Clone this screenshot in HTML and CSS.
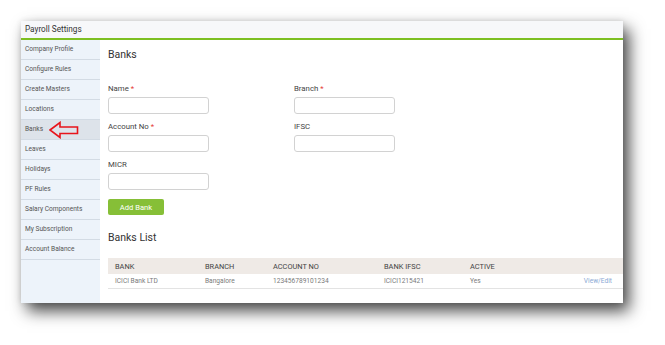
FILE: index.html
```html
<!DOCTYPE html>
<html>
<head>
<meta charset="utf-8">
<link rel="stylesheet" href="styles.css">
</head>
<body>
<div class="panel">
  <div class="panel-head">Payroll Settings</div>
  <div class="panel-body">
    <nav class="sidebar">
      <div class="nav-item">Company Profile</div>
      <div class="nav-item">Configure Rules</div>
      <div class="nav-item">Create Masters</div>
      <div class="nav-item">Locations</div>
      <div class="nav-item active">Banks
        <svg class="arrow" width="30" height="18" viewBox="0 0 30 18"><polygon points="1,9 11,1.5 11,6 28.5,6 28.5,12.5 11,12.5 11,16.5" fill="none" stroke="#e8141b" stroke-width="1.6" stroke-linejoin="miter"/></svg>
      </div>
      <div class="nav-item">Leaves</div>
      <div class="nav-item">Holidays</div>
      <div class="nav-item">PF Rules</div>
      <div class="nav-item">Salary Components</div>
      <div class="nav-item">My Subscription</div>
      <div class="nav-item">Account Balance</div>
    </nav>
    <main class="content">
      <h2 class="title">Banks</h2>
      <div class="form">
        <div class="field"><label>Name <span class="req">*</span></label><div class="input"></div></div>
        <div class="field"><label>Branch <span class="req">*</span></label><div class="input"></div></div>
        <div class="field"><label>Account No <span class="req">*</span></label><div class="input"></div></div>
        <div class="field"><label>IFSC</label><div class="input"></div></div>
        <div class="field"><label>MICR</label><div class="input"></div></div>
      </div>
      <button class="btn">Add Bank</button>
      <h2 class="title list-title">Banks List</h2>
      <div class="table">
        <div class="row head">
          <span>BANK</span><span>BRANCH</span><span>ACCOUNT NO</span><span>BANK IFSC</span><span>ACTIVE</span><span></span>
        </div>
        <div class="row">
          <span>ICICI Bank LTD</span><span>Bangalore</span><span>123456789101234</span><span>ICICI1215421</span><span>Yes</span><span class="link">View/Edit</span>
        </div>
      </div>
    </main>
  </div>
</div>
</body>
</html>
```
FILE: styles.css
```css
html, body {
  margin: 0;
  padding: 0;
  background: #ffffff;
}
body {
  font-family: Roboto, "Liberation Sans", sans-serif;
  padding: 21px 0 0 21px;
  width: 665px;
  height: 345px;
  box-sizing: border-box;
  overflow: hidden;
}
.panel {
  width: 602px;
  height: 282px;
  background: #fff;
  display: flex;
  flex-direction: column;
  box-shadow: 6px 8px 15px rgba(0,0,0,0.72), 0 0 6px rgba(0,0,0,0.1);
}
.panel-head {
  height: 17px;
  line-height: 17px;
  background: #f7f8fa;
  border-bottom: 2px solid #7dbf22;
  font-size: 8.2px;
  color: #333;
  padding-left: 4px;
}
.panel-body {
  flex: 1;
  display: flex;
  min-height: 0;
}
.sidebar {
  width: 79px;
  background: #edf3fa;
  display: flex;
  flex-direction: column;
}
.nav-item {
  position: relative;
  height: 19px;
  line-height: 19px;
  border-bottom: 1px solid #d3dbe4;
  font-size: 6.6px;
  color: #555;
  padding-left: 4px;
}
.nav-item.active {
  background: #dde3ea;
}
.arrow {
  position: absolute;
  left: 28px;
  top: 1px;
}
.content {
  flex: 1;
  padding: 8px 0 0 8px;
  display: flex;
  flex-direction: column;
  align-items: flex-start;
}
.title {
  margin: 0;
  font-size: 10.5px;
  line-height: 14px;
  font-weight: 400;
  color: #333;
}
.form {
  margin-top: 22px;
  display: grid;
  grid-template-columns: 186px 100px;
  row-gap: 8px;
}
.field {
  display: flex;
  flex-direction: column;
  gap: 3px;
}
.field label {
  font-size: 7.8px;
  line-height: 10px;
  color: #444;
}
.req {
  color: #e53935;
}
.input {
  width: 99px;
  height: 15px;
  border: 1px solid #d2d2d2;
  border-radius: 3px;
  background: #fff;
}
.btn {
  margin-top: 9px;
  width: 56px;
  height: 16px;
  border: none;
  border-radius: 2px;
  background: #86bf37;
  color: #fff;
  font-family: Roboto, "Liberation Sans", sans-serif;
  font-size: 7.6px;
  font-weight: 400;
  padding: 0;
}
.list-title {
  margin-top: 16px;
}
.table {
  margin-top: 13px;
  align-self: stretch;
}
.row {
  display: grid;
  grid-template-columns: 90px 68px 111px 86px 1fr auto;
  padding: 0 11px 0 7px;
  align-items: center;
}
.row.head {
  height: 16px;
  background: #efeae6;
  font-size: 7.4px;
  color: #444;
}
.row:not(.head) {
  height: 14px;
  border-bottom: 1px solid #e3e3e3;
  font-size: 6.6px;
  color: #7a7a7a;
}
.link {
  color: #8aa9d4;
}
```
